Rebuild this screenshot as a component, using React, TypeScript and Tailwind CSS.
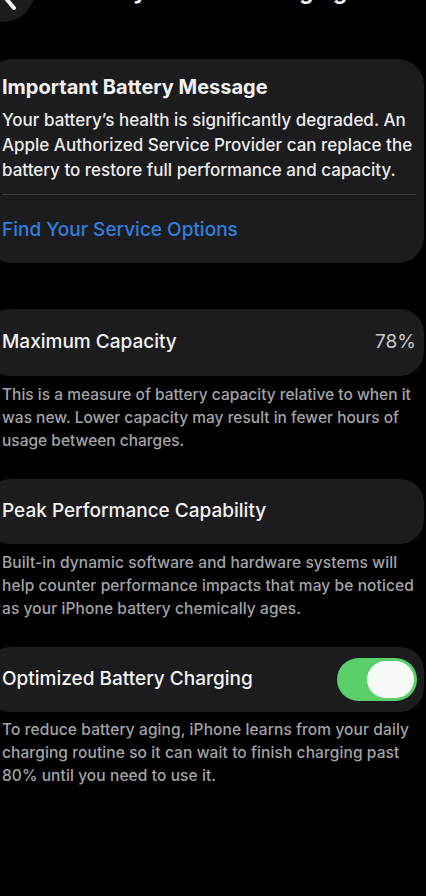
import React from "react";

function Toggle() {
  return (
    <div className="w-[80px] h-[43px] rounded-full bg-[#5ad06b] flex items-center justify-end pr-[3px] shrink-0">
      <div className="w-[47px] h-[37px] rounded-full bg-[#f7fbf7]" />
    </div>
  );
}

export default function App() {
  return (
    <div className="min-h-[896px] bg-black overflow-hidden font-['Inter',sans-serif] text-[#f2f2f2]">
      {/* header */}
      <div className="flex items-center h-[64px] mt-[-42px]">
        <div className="w-[64px] h-[64px] ml-[-29px] rounded-full bg-[#1c1c1e] flex items-center justify-center shrink-0">
          <svg width="24" height="34" viewBox="0 0 24 34" className="ml-[14px] mt-[10px]">
            <path d="M16 4 L5 17 L16 30" stroke="#f5f5f5" strokeWidth="4" fill="none" strokeLinecap="round" strokeLinejoin="round" />
          </svg>
        </div>
        <div className="ml-[33px] mt-[2px] text-[22.5px] font-bold tracking-[-0.2px] leading-[30px] whitespace-nowrap">
          Battery Health &amp; Charging
        </div>
      </div>

      <div className="ml-[-14px] mr-[2px]">
        {/* card 1 */}
        <div className="mt-[37px] rounded-[26px] bg-[#1c1c1e] pl-[16px] pr-[8px] pt-[16px] pb-[21px]">
          <div className="text-[20px] font-bold leading-[24px]">Important Battery Message</div>
          <div className="mt-[9px] text-[17px] leading-[25px] text-[#ececec] font-medium">
            Your battery’s health is significantly degraded. An Apple Authorized Service Provider can replace the battery to restore full performance and capacity.
          </div>
          <div className="mt-[11px] h-px bg-[#3a3a3c]" />
          <div className="mt-[23px] text-[19px] leading-[24px] text-[#2f7fde] font-medium">Find Your Service Options</div>
        </div>

        {/* card 2 */}
        <div className="mt-[46px] h-[67px] rounded-[24px] bg-[#1c1c1e] pl-[16px] pr-[8px] flex items-center justify-between">
          <div className="text-[19px] font-medium">Maximum Capacity</div>
          <div className="text-[19px] text-[#c8c8cc]">78%</div>
        </div>
        <div className="pl-[16px] pr-[4px] mt-[7px] text-[15.5px] leading-[23px] text-[#a3a3a8] font-medium">
          This is a measure of battery capacity relative to when it was new. Lower capacity may result in fewer hours of usage between charges.
        </div>

        {/* card 3 */}
        <div className="mt-[27px] h-[65px] rounded-[24px] bg-[#1c1c1e] pl-[16px] pr-[8px] flex items-center">
          <div className="text-[19px] font-medium">Peak Performance Capability</div>
        </div>
        <div className="pl-[16px] pr-[8px] mt-[7px] text-[15.5px] tracking-[0.1px] leading-[23px] text-[#a3a3a8] font-medium">
          Built-in dynamic software and hardware systems will help counter performance impacts that may be noticed as your iPhone battery chemically ages.
        </div>

        {/* card 4 */}
        <div className="mt-[27px] h-[65px] rounded-[24px] bg-[#1c1c1e] pl-[16px] pr-[7px] flex items-center justify-between">
          <div className="text-[19px] font-medium">Optimized Battery Charging</div>
          <Toggle />
        </div>
        <div className="pl-[16px] pr-[8px] mt-[6px] text-[15.5px] tracking-[0.1px] leading-[23px] text-[#a3a3a8] font-medium">
          To reduce battery aging, iPhone learns from your daily charging routine so it can wait to finish charging past 80% until you need to use it.
        </div>
      </div>
    </div>
  );
}
